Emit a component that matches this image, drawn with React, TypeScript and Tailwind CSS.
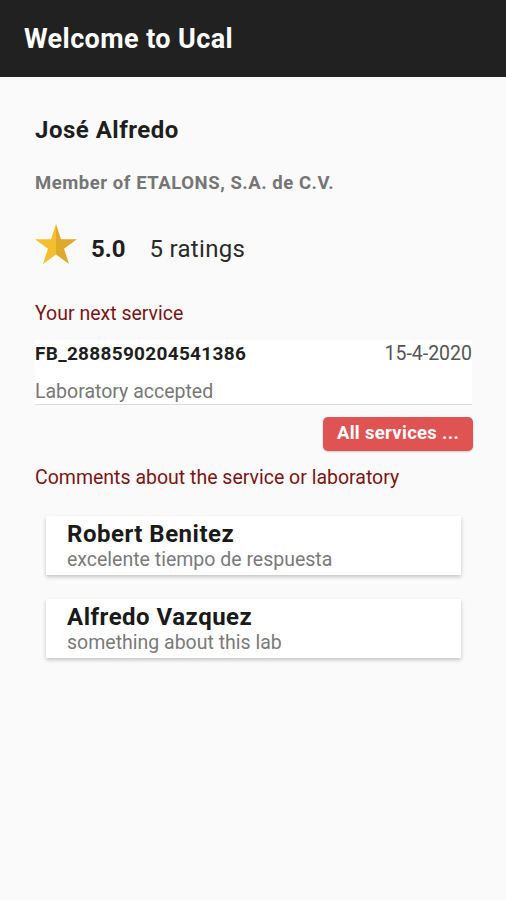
import React from "react"

const Star = () => (
	<svg width="42" height="40" viewBox="0 0 19.02 18.09" className="shrink-0">
		<path d="M9.51 0 L11.755 6.91 L19.02 6.91 L13.14 11.18 L15.39 18.09 L9.51 13.82 Z" fill="#deaa2a" />
		<path d="M9.51 0 L7.265 6.91 L0 6.91 L5.88 11.18 L3.63 18.09 L9.51 13.82 Z" fill="#f4bf2e" />
	</svg>
)

const Comment = ({ name, text }: { name: string; text: string }) => (
	<div className="ml-[11px] mr-[10px] h-[59px] bg-white px-[21px] pt-[4px] shadow-[0_2px_4px_rgba(0,0,0,0.22)]">
		<div className="text-[24px] leading-[28px] font-bold tracking-[0.5px] text-[#1a1a1a]">{name}</div>
		<div className="text-[19.5px] leading-[24px] text-[#7a7a7a]">{text}</div>
	</div>
)

export default function App() {
	return (
		<div className="min-h-[900px] bg-[#fafafa] font-['Roboto',sans-serif]">
			<header className="h-[77px] bg-[#212121] px-[24px] pt-[2px] flex items-center">
				<h1 className="text-[27px] font-bold tracking-[0.4px] text-white">Welcome to Ucal</h1>
			</header>

			<main className="px-[35px] pt-[39px]">
				<div className="text-[24px] leading-[28px] font-bold tracking-[0.5px] text-[#1e1e1e]">José Alfredo</div>
				<div className="mt-[28px] text-[18.5px] leading-[22px] font-bold tracking-[0.55px] text-[#757575]">
					Member of ETALONS, S.A. de C.V.
				</div>

				<div className="mt-[30px] flex items-start">
					<Star />
					<span className="ml-[14px] mt-[11px] text-[24px] leading-[28px] font-bold text-[#1e1e1e]">5.0</span>
					<span className="ml-[24px] mt-[11px] text-[24px] leading-[28px] tracking-[0.3px] text-[#2a2a2a]">
						5 ratings
					</span>
				</div>

				<div className="mt-[38px] text-[19.5px] leading-[24px] text-[#7a1515]">Your next service</div>

				<div className="mt-[14px] mr-[-1px] bg-white border-b border-[#dcdcdc] pt-[2px]">
					<div className="flex items-center justify-between">
						<span className="text-[19px] leading-[24px] font-bold tracking-[0.3px] text-[#1e1e1e]">
							FB_2888590204541386
						</span>
						<span className="text-[19.5px] leading-[24px] text-[#555]">15-4-2020</span>
					</div>
					<div className="mt-[14px] text-[19.5px] leading-[24px] text-[#777]">Laboratory accepted</div>
				</div>

				<div className="mt-[12px] flex justify-end mr-[-2px]">
					<button className="h-[34px] w-[150px] rounded-[5px] bg-[#e05353] text-[18.5px] font-bold tracking-[0.3px] text-white shadow-[0_1px_2px_rgba(0,0,0,0.2)]">
						All services ...
					</button>
				</div>

				<div className="mt-[15px] text-[19.5px] leading-[24px] text-[#7a1515]">
					Comments about the service or laboratory
				</div>

				<div className="mt-[26px] flex flex-col gap-[24px]">
					<Comment name="Robert Benitez" text="excelente tiempo de respuesta" />
					<Comment name="Alfredo Vazquez" text="something about this lab" />
				</div>
			</main>
		</div>
	)
}
